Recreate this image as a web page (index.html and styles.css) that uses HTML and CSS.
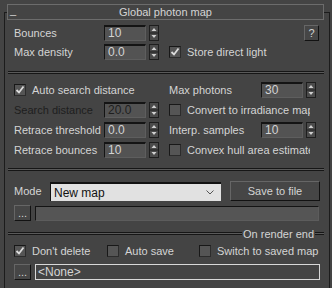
FILE: index.html
```html
<!DOCTYPE html>
<html lang="en">

<head>
    <meta charset="utf-8">
    <title>Global photon map</title>
    <link rel="stylesheet" href="styles.css">
</head>

<body>
    <div class="rollout">
        <div class="titel">
            <span class="mini">_</span>
            <span>Global photon map</span>
            <span></span>
        </div>

        <section class="sek sek1">
            <div class="felt">
                <span class="navn">Bounces</span>
                <span class="tal">10</span>
                <svg class="spin" width="10" height="16" viewBox="0 0 10 16"><rect x="0.5" y="0.5" width="9" height="15" fill="#4b4b4b" stroke="#1e1e1e"/><path d="M1 8h8" stroke="#1e1e1e"/><path d="M5 3l2.5 3h-5z M5 13l2.5-3h-5z" fill="#d0d0d0"/></svg>
            </div>
            <span></span>
            <button class="knap hjaelp">?</button>

            <div class="felt">
                <span class="navn">Max density</span>
                <span class="tal">0.0</span>
                <svg class="spin" width="10" height="16" viewBox="0 0 10 16"><rect x="0.5" y="0.5" width="9" height="15" fill="#4b4b4b" stroke="#1e1e1e"/><path d="M1 8h8" stroke="#1e1e1e"/><path d="M5 3l2.5 3h-5z M5 13l2.5-3h-5z" fill="#d0d0d0"/></svg>
            </div>
            <label class="tjek">
                <span class="boks"><svg width="10" height="10" viewBox="0 0 10 10"><path d="M1.5 5l2.5 2.5 4.5-6" fill="none" stroke="#dcdcdc" stroke-width="1.8"/></svg></span>
                <span>Store direct light</span>
            </label>
            <span></span>
        </section>

        <div class="streg"></div>

        <section class="sek sek2">
            <label class="tjek">
                <span class="boks"><svg width="10" height="10" viewBox="0 0 10 10"><path d="M1.5 5l2.5 2.5 4.5-6" fill="none" stroke="#dcdcdc" stroke-width="1.8"/></svg></span>
                <span>Auto search distance</span>
            </label>
            <div class="felt hoejre">
                <span class="navn">Max photons</span>
                <span class="tal">30</span>
                <svg class="spin" width="10" height="16" viewBox="0 0 10 16"><rect x="0.5" y="0.5" width="9" height="15" fill="#4b4b4b" stroke="#1e1e1e"/><path d="M1 8h8" stroke="#1e1e1e"/><path d="M5 3l2.5 3h-5z M5 13l2.5-3h-5z" fill="#d0d0d0"/></svg>
            </div>

            <div class="felt slukket">
                <span class="navn">Search distance</span>
                <span class="tal">20.0</span>
                <svg class="spin" width="10" height="16" viewBox="0 0 10 16"><rect x="0.5" y="0.5" width="9" height="15" fill="#4b4b4b" stroke="#1e1e1e"/><path d="M1 8h8" stroke="#1e1e1e"/><path d="M5 3l2.5 3h-5z M5 13l2.5-3h-5z" fill="#d0d0d0"/></svg>
            </div>
            <label class="tjek klip">
                <span class="boks"></span>
                <span>Convert to irradiance map</span>
            </label>

            <div class="felt">
                <span class="navn">Retrace threshold</span>
                <span class="tal">0.0</span>
                <svg class="spin" width="10" height="16" viewBox="0 0 10 16"><rect x="0.5" y="0.5" width="9" height="15" fill="#4b4b4b" stroke="#1e1e1e"/><path d="M1 8h8" stroke="#1e1e1e"/><path d="M5 3l2.5 3h-5z M5 13l2.5-3h-5z" fill="#d0d0d0"/></svg>
            </div>
            <div class="felt hoejre">
                <span class="navn">Interp. samples</span>
                <span class="tal">10</span>
                <svg class="spin" width="10" height="16" viewBox="0 0 10 16"><rect x="0.5" y="0.5" width="9" height="15" fill="#4b4b4b" stroke="#1e1e1e"/><path d="M1 8h8" stroke="#1e1e1e"/><path d="M5 3l2.5 3h-5z M5 13l2.5-3h-5z" fill="#d0d0d0"/></svg>
            </div>

            <div class="felt">
                <span class="navn">Retrace bounces</span>
                <span class="tal">10</span>
                <svg class="spin" width="10" height="16" viewBox="0 0 10 16"><rect x="0.5" y="0.5" width="9" height="15" fill="#4b4b4b" stroke="#1e1e1e"/><path d="M1 8h8" stroke="#1e1e1e"/><path d="M5 3l2.5 3h-5z M5 13l2.5-3h-5z" fill="#d0d0d0"/></svg>
            </div>
            <label class="tjek klip">
                <span class="boks"></span>
                <span>Convex hull area estimate</span>
            </label>
        </section>

        <div class="streg streg2"></div>

        <section class="sek sek3">
            <div class="raekke">
                <span class="mode">Mode</span>
                <div class="vaelg">
                    <span>New map</span>
                    <svg width="8" height="5" viewBox="0 0 8 5"><path d="M0.5 0.5l3.5 3.5 3.5-3.5" fill="none" stroke="#555" stroke-width="1"/></svg>
                </div>
                <button class="knap gem">Save to file</button>
            </div>
            <div class="raekke raekke2">
                <button class="knap prik">...</button>
                <div class="bar"></div>
            </div>
        </section>

        <div class="slut">
            <span class="linje"></span>
            <span class="slut-tekst">On render end</span>
            <span class="linje kort"></span>
        </div>

        <section class="sek sek4">
            <div class="valg">
                <label class="tjek">
                    <span class="boks"><svg width="10" height="10" viewBox="0 0 10 10"><path d="M1.5 5l2.5 2.5 4.5-6" fill="none" stroke="#dcdcdc" stroke-width="1.8"/></svg></span>
                    <span>Don't delete</span>
                </label>
                <label class="tjek">
                    <span class="boks"></span>
                    <span>Auto save</span>
                </label>
                <label class="tjek">
                    <span class="boks"></span>
                    <span>Switch to saved map</span>
                </label>
            </div>
            <div class="raekke raekke2">
                <button class="knap prik">...</button>
                <div class="fil">&lt;None&gt;</div>
            </div>
        </section>
    </div>
</body>

</html>
```

FILE: styles.css
```css
body {
    margin: 0;
    background-color: #444444;
    font-family: "Liberation Sans", Arial, sans-serif;
    font-size: 11px;
    color: #d4d4d4;
}

.rollout {
    margin: 12px 2px 0 4px;
    height: 275px;
    border-top: 1px solid #1c1c1c;
    border-left: 1px solid #1c1c1c;
    border-right: 1px solid #1c1c1c;
}

.titel {
    display: grid;
    grid-template-columns: 20px 1fr 20px;
    margin: -9px 5px 0 2px;
    height: 14px;
    line-height: 14px;
    border: 1px solid #6c6c6c;
    background-color: #444444;
    text-align: center;
}

.mini {
    text-align: left;
    padding-left: 2px;
    line-height: 10px;
}

.sek {
    padding-left: 9px;
}

.sek1 {
    display: grid;
    grid-template-columns: 155px 135px 15px;
    grid-auto-rows: 16px;
    row-gap: 3px;
    padding-top: 5px;
}

.sek2 {
    display: grid;
    grid-template-columns: 155px 1fr;
    grid-auto-rows: 16px;
    row-gap: 4px;
    padding-top: 8px;
}

.felt {
    display: flex;
    align-items: center;
}

.navn {
    width: 90px;
    white-space: nowrap;
}

.hoejre .navn {
    width: 92px;
}

.tal {
    box-sizing: border-box;
    width: 42px;
    height: 16px;
    line-height: 13px;
    padding-left: 3px;
    background-color: #535353;
    border-top: 2px solid #141414;
    border-left: 1px solid #141414;
    border-right: 1px solid #5e5e5e;
    border-bottom: 1px solid #5e5e5e;
    font-size: 12px;
}

.spin {
    margin-left: 3px;
}

.slukket .navn,
.slukket .tal {
    color: #1e1e1e;
}

.tjek {
    display: flex;
    align-items: center;
    gap: 6px;
    white-space: nowrap;
}

.boks {
    box-sizing: border-box;
    width: 12px;
    height: 12px;
    flex: none;
    display: flex;
    align-items: center;
    justify-content: center;
    background-color: #555555;
    border-top: 1px solid #181818;
    border-left: 1px solid #181818;
    border-right: 1px solid #2c2c2c;
    border-bottom: 1px solid #2c2c2c;
}

.klip {
    width: 141px;
    overflow: hidden;
}

.knap {
    box-sizing: border-box;
    margin: 0;
    padding: 0;
    font-family: inherit;
    font-size: 11px;
    color: #d4d4d4;
    background-color: #464646;
    border-top: 1px solid #666666;
    border-left: 1px solid #666666;
    border-right: 1px solid #121212;
    border-bottom: 1px solid #121212;
}

.hjaelp {
    width: 15px;
    height: 16px;
}

.streg {
    margin: 11px 5px 0 3px;
    height: 1px;
    background-color: #5a5a5a;
    border-top: 1px solid #161616;
    border-bottom: 1px solid #161616;
}

.streg2 {
    margin-top: 10px;
}

.sek3 {
    padding-top: 10px;
}

.raekke {
    display: flex;
    align-items: center;
    height: 20px;
}

.raekke2 {
    height: 16px;
    margin-top: 4px;
    align-items: stretch;
}

.mode {
    width: 36px;
}

.vaelg {
    box-sizing: border-box;
    width: 171px;
    height: 19px;
    margin-top: 1px;
    display: flex;
    align-items: center;
    justify-content: space-between;
    padding: 0 7px 0 3px;
    background-color: #e1e1e1;
    color: #111111;
    font-size: 12px;
    border-top: 2px solid #121212;
    border-left: 1px solid #121212;
}

.gem {
    width: 90px;
    height: 20px;
    margin-left: 9px;
}

.prik {
    width: 17px;
    line-height: 10px;
}

.bar {
    width: 284px;
    margin: 1px 0 0 4px;
    box-sizing: border-box;
    background-color: #555555;
    border-top: 1px solid #141414;
    border-left: 1px solid #141414;
    border-right: 1px solid #5c5c5c;
    border-bottom: 1px solid #5c5c5c;
}

.slut {
    display: flex;
    align-items: center;
    height: 13px;
    margin: 6px 5px 0 3px;
}

.linje {
    flex: 1;
    height: 1px;
    background-color: #5a5a5a;
    border-top: 1px solid #161616;
    border-bottom: 1px solid #161616;
}

.linje.kort {
    flex: none;
    width: 9px;
}

.slut-tekst {
    padding: 0 1px;
}

.sek4 {
    padding-top: 3px;
}

.valg {
    display: grid;
    grid-template-columns: 93px 92px auto;
    height: 16px;
    align-items: center;
}

.sek4 .raekke2 {
    margin-top: 5px;
}

.fil {
    box-sizing: border-box;
    width: 285px;
    margin-left: 4px;
    padding-left: 2px;
    line-height: 14px;
    border: 1px solid #d8d8d8;
    font-size: 12px;
}
```
